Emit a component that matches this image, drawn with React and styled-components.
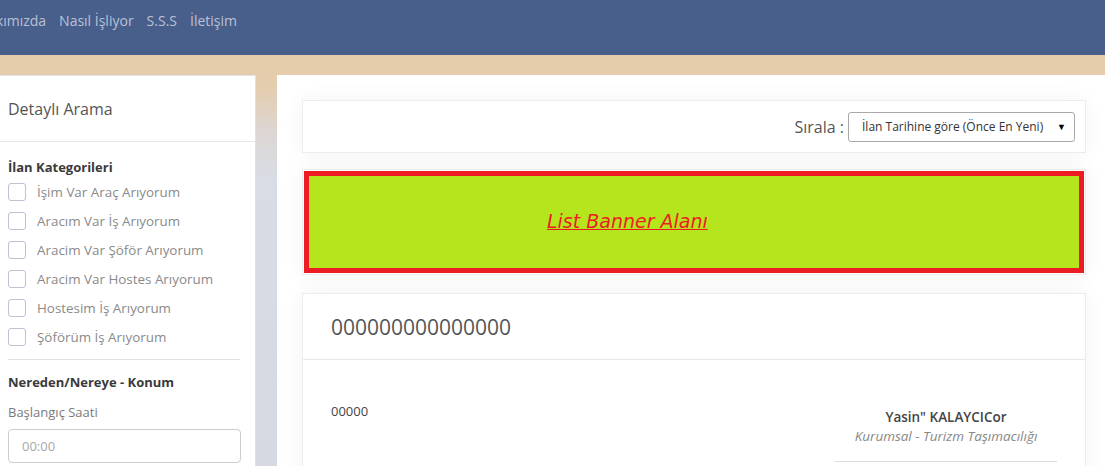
import React from "react";
import styled, { createGlobalStyle } from "styled-components";

const GlobalStyle = createGlobalStyle`
  * { box-sizing: border-box; }
  html, body {
    margin: 0;
    padding: 0;
    overflow: hidden;
  }
  body {
    font-family: "Open Sans", "Liberation Sans", sans-serif;
    background: linear-gradient(to bottom, #485e8b 0, #485e8b 55px, #e6cca8 55px, #e4cdb0 90px, #dcd6d2 130px, #d9dce4 175px, #d6d9e1 466px);
    min-height: 466px;
  }
`;

const navItems = ["Anasayfa", "Hakkımızda", "Nasıl İşliyor", "S.S.S", "İletişim"];

const categories = [
  "İşim Var Araç Arıyorum",
  "Aracım Var İş Arıyorum",
  "Aracim Var Şöför Arıyorum",
  "Aracim Var Hostes Arıyorum",
  "Hostesim İş Arıyorum",
  "Şöförüm İş Arıyorum",
];

export default function App() {
  return (
    <>
      <GlobalStyle />
      <Header>
        <Nav>
          {navItems.map((item) => (
            <NavLink key={item}>{item}</NavLink>
          ))}
        </Nav>
      </Header>
      <Layout>
        <Sidebar>
          <SideTitle>Detaylı Arama</SideTitle>
          <SideBody>
            <GroupTitle>İlan Kategorileri</GroupTitle>
            <CheckList>
              {categories.map((c) => (
                <CheckRow key={c}>
                  <Box />
                  <CheckLabel>{c}</CheckLabel>
                </CheckRow>
              ))}
            </CheckList>
            <Divider />
            <GroupTitle>Nereden/Nereye - Konum</GroupTitle>
            <FieldLabel>Başlangıç Saati</FieldLabel>
            <TimeInput placeholder="00:00" />
          </SideBody>
        </Sidebar>
        <Main>
          <SortCard>
            <SortLabel>Sırala :</SortLabel>
            <Select>
              <span>İlan Tarihine göre (Önce En Yeni)</span>
              <Caret>▼</Caret>
            </Select>
          </SortCard>
          <BannerWrap>
            <Banner>
              <BannerLink href="#">List Banner Alanı</BannerLink>
            </Banner>
          </BannerWrap>
          <ListingCard>
            <ListingHead>000000000000000</ListingHead>
            <ListingBody>
              <ListingText>00000</ListingText>
              <Owner>
                <OwnerName>Yasin" KALAYCICor</OwnerName>
                <OwnerType>Kurumsal - Turizm Taşımacılığı</OwnerType>
                <OwnerLine />
              </Owner>
            </ListingBody>
          </ListingCard>
        </Main>
      </Layout>
    </>
  );
}

const Header = styled.header`
  height: 55px;
  display: flex;
  align-items: flex-start;
`;

const Nav = styled.nav`
  width: 237px;
  height: 40px;
  display: flex;
  justify-content: flex-end;
  align-items: center;
  gap: 13px;
  white-space: nowrap;
`;

const NavLink = styled.a`
  font-size: 14px;
  color: #b9c1d6;
  flex-shrink: 0;
`;

const Layout = styled.div`
  display: flex;
  gap: 21px;
  width: 1126px;
  margin-left: -15px;
  padding-top: 20px;
`;

const Sidebar = styled.aside`
  width: 271px;
  flex-shrink: 0;
  height: 400px;
  background: #fff;
  border: 1px solid #dfe1e6;
`;

const SideTitle = styled.div`
  height: 66px;
  padding: 0 22px;
  display: flex;
  align-items: center;
  font-size: 16px;
  color: #555;
  border-bottom: 1px solid #e6e6e6;
`;

const SideBody = styled.div`
  padding: 14px 15px 0 22px;
`;

const GroupTitle = styled.div`
  font-size: 13px;
  font-weight: 700;
  color: #3a3a3a;
  line-height: 22px;
`;

const CheckList = styled.div`
  display: flex;
  flex-direction: column;
  gap: 11px;
  margin-top: 5px;
`;

const CheckRow = styled.label`
  display: flex;
  align-items: center;
  gap: 11px;
  height: 18px;
`;

const Box = styled.span`
  width: 18px;
  height: 18px;
  border: 1px solid #bcc2d3;
  border-radius: 3px;
  background: #fff;
`;

const CheckLabel = styled.span`
  font-size: 13.4px;
  color: #8a8a8a;
`;

const Divider = styled.hr`
  border: 0;
  border-top: 1px solid #e3e3e3;
  margin: 13px 0 11px;
`;

const FieldLabel = styled.div`
  font-size: 13px;
  color: #7a7a7a;
  margin-top: 10px;
`;

const TimeInput = styled.input`
  margin-top: 8px;
  width: 233px;
  height: 34px;
  border: 1px solid #cdcdcd;
  border-radius: 4px;
  padding: 0 13px;
  font-family: inherit;
  font-size: 13px;
  &::placeholder { color: #a8a8a8; }
`;

const Main = styled.main`
  flex: 1;
  height: 420px;
  background: #fff;
  padding: 25px 25px 0;
  display: flex;
  flex-direction: column;
  gap: 16px;
`;

const Card = styled.div`
  background: #fff;
  border: 1px solid #ececec;
  box-shadow: 0 0 22px rgba(0, 0, 0, 0.05);
`;

const SortCard = styled(Card)`
  height: 53px;
  flex-shrink: 0;
  display: flex;
  align-items: center;
  justify-content: flex-end;
  gap: 4px;
  padding-right: 10px;
`;

const SortLabel = styled.span`
  font-size: 16px;
  color: #555;
`;

const Select = styled.div`
  width: 227px;
  height: 30px;
  border: 1px solid #a9a9a9;
  border-radius: 3px;
  display: flex;
  align-items: center;
  justify-content: space-between;
  padding: 0 8px 0 13px;
  font-size: 12px;
  color: #333;
`;

const Caret = styled.span`
  font-size: 9px;
  color: #000;
`;

const BannerWrap = styled(Card)`
  padding: 1px;
  flex-shrink: 0;
`;

const Banner = styled.div`
  height: 102px;
  background: #b5e61d;
  border: 5px solid #ed1c24;
  display: flex;
  align-items: center;
  padding-left: 238px;
`;

const BannerLink = styled.a`
  font-size: 19px;
  font-style: italic;
  color: #ed1c24;
  text-decoration: underline;
  font-family: "DejaVu Sans", "Open Sans", sans-serif;
  margin-top: -3px;
`;

const ListingCard = styled(Card)`
  margin-top: 2px;
  flex: 1;
`;

const ListingHead = styled.div`
  height: 66px;
  padding: 0 28px;
  display: flex;
  align-items: center;
  font-size: 21px;
  color: #555;
  border-bottom: 1px solid #e8e8e8;
`;

const ListingBody = styled.div`
  display: flex;
  justify-content: space-between;
  padding: 42px 28px 0;
`;

const ListingText = styled.div`
  font-size: 13px;
  color: #444;
`;

const Owner = styled.div`
  width: 222px;
  margin-top: 6px;
  display: flex;
  flex-direction: column;
  align-items: center;
`;

const OwnerName = styled.div`
  font-size: 13.5px;
  font-weight: 600;
  color: #444;
`;

const OwnerType = styled.div`
  font-size: 13.5px;
  font-style: italic;
  color: #888;
  margin-top: 1px;
`;

const OwnerLine = styled.div`
  width: 100%;
  border-top: 1px solid #ddd;
  margin-top: 16px;
`;
